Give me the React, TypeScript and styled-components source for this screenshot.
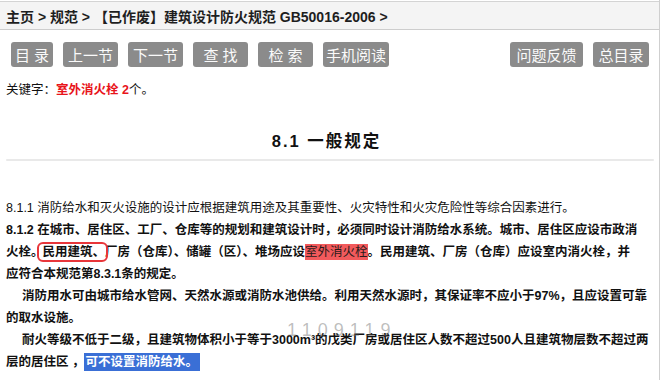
import React from "react";
import styled, { createGlobalStyle } from "styled-components";

const Global = createGlobalStyle`
  html, body { margin: 0; padding: 0; background: #fff; }
  body { font-family: "Liberation Sans", "Noto Sans CJK SC", sans-serif; color: #222; }
`;

const Page = styled.div`
  position: relative;
  width: 659px;
  height: 380px;
  border-right: 1px solid #cfcfcf;
  overflow: hidden;
`;

const Crumbs = styled.div`
  margin-top: 1px;
  height: 27px;
  border-top: 1px solid #d4d4d4;
  border-bottom: 1px solid #cdcdcd;
  background: #f4f4f4;
  display: flex;
  align-items: center;
  padding-left: 6px;
  font-size: 14px;
  font-weight: bold;
  color: #1e1e1e;
  white-space: nowrap;
`;

const Toolbar = styled.div`
  display: flex;
  align-items: center;
  gap: 10px;
  padding: 12px 10px 0 11px;
`;

const Spacer = styled.div`
  flex: 1;
`;

const Btn = styled.div<{ $w: number }>`
  width: ${(p) => p.$w}px;
  height: 25px;
  border-radius: 3px;
  background: #8b8b8b;
  color: #fafafa;
  font-size: 15px;
  display: flex;
  align-items: center;
  justify-content: center;
  white-space: pre;
`;

const Keyword = styled.div`
  margin-top: 13px;
  padding-left: 6px;
  font-size: 12.5px;
  line-height: 20px;
  color: #111;
`;

const Red = styled.b`
  color: #e8141a;
`;

const Title = styled.h2`
  margin: 29px 0 0;
  text-align: center;
  font-size: 16.5px;
  line-height: 24px;
  letter-spacing: 2px;
  font-weight: bold;
  color: #111;
  padding-right: 6px;
`;

const Divider = styled.div`
  margin: 6px 5px 0 6px;
  height: 2px;
  background: #e9e9e9;
  border-radius: 1px;
`;

const Body = styled.div`
  margin-top: 36px;
  padding-left: 6px;
  font-size: 12.5px;
  line-height: 22px;
  color: #111;
`;

const Para = styled.p<{ $bold?: boolean; $indent?: boolean }>`
  margin: 0;
  white-space: nowrap;
  font-weight: ${(p) => (p.$bold ? "bold" : "normal")};
  text-indent: ${(p) => (p.$indent ? "16px" : "0")};
`;

const Boxed = styled.span`
  outline: 2px solid #e8363a;
  outline-offset: 1px;
  border-radius: 3px;
  margin-left: -4px;
  padding-left: 3px;
`;

const Mark = styled.span`
  background: #f25a5c;
  font-weight: normal;
  color: #2a1a1a;
  padding: 1px 0;
`;

const Selected = styled.span`
  background: #3a6fd6;
  color: #fff;
  padding: 2px 2px 2px 1px;
`;

const Watermark = styled.div`
  position: absolute;
  left: 287px;
  top: 320px;
  font-size: 18px;
  letter-spacing: 6px;
  color: rgba(110, 110, 110, 0.45);
  font-family: "Liberation Sans", sans-serif;
  pointer-events: none;
`;

export default function App() {
  return (
    <>
      <Global />
      <Page>
        <Crumbs>主页 &gt; 规范 &gt; 【已作废】建筑设计防火规范 GB50016-2006 &gt;</Crumbs>
        <Toolbar>
          <Btn $w={42}>目 录</Btn>
          <Btn $w={55}>上一节</Btn>
          <Btn $w={55}>下一节</Btn>
          <Btn $w={55}>查 找</Btn>
          <Btn $w={55}>检 索</Btn>
          <Btn $w={66}>手机阅读</Btn>
          <Spacer />
          <Btn $w={73}>问题反馈</Btn>
          <Btn $w={56}>总目录</Btn>
        </Toolbar>
        <Keyword>
          关键字：<Red>室外消火栓 2</Red>个。
        </Keyword>
        <Title>8.1 一般规定</Title>
        <Divider />
        <Body>
          <Para>8.1.1 消防给水和灭火设施的设计应根据建筑用途及其重要性、火灾特性和火灾危险性等综合因素进行。</Para>
          <Para $bold>
            8.1.2 在城市、居住区、工厂、仓库等的规划和建筑设计时，必须同时设计消防给水系统。城市、居住区应设市政消
            <br />
            火栓。<Boxed>民用建筑、</Boxed>厂房（仓库）、储罐（区）、堆场应设<Mark>室外消火栓</Mark>。民用建筑、厂房（仓库）应设室内消火栓，并
            <br />
            应符合本规范第8.3.1条的规定。
          </Para>
          <Para $bold $indent>
            消防用水可由城市给水管网、天然水源或消防水池供给。利用天然水源时，其保证率不应小于97%，且应设置可靠
            <br />
            的取水设施。
          </Para>
          <Para $bold $indent>
            耐火等级不低于二级，且建筑物体积小于等于3000m³的戊类厂房或居住区人数不超过500人且建筑物层数不超过两
            <br />
            层的居住区 ，<Selected>可不设置消防给水。</Selected>
          </Para>
        </Body>
        <Watermark>1109119</Watermark>
      </Page>
    </>
  );
}
